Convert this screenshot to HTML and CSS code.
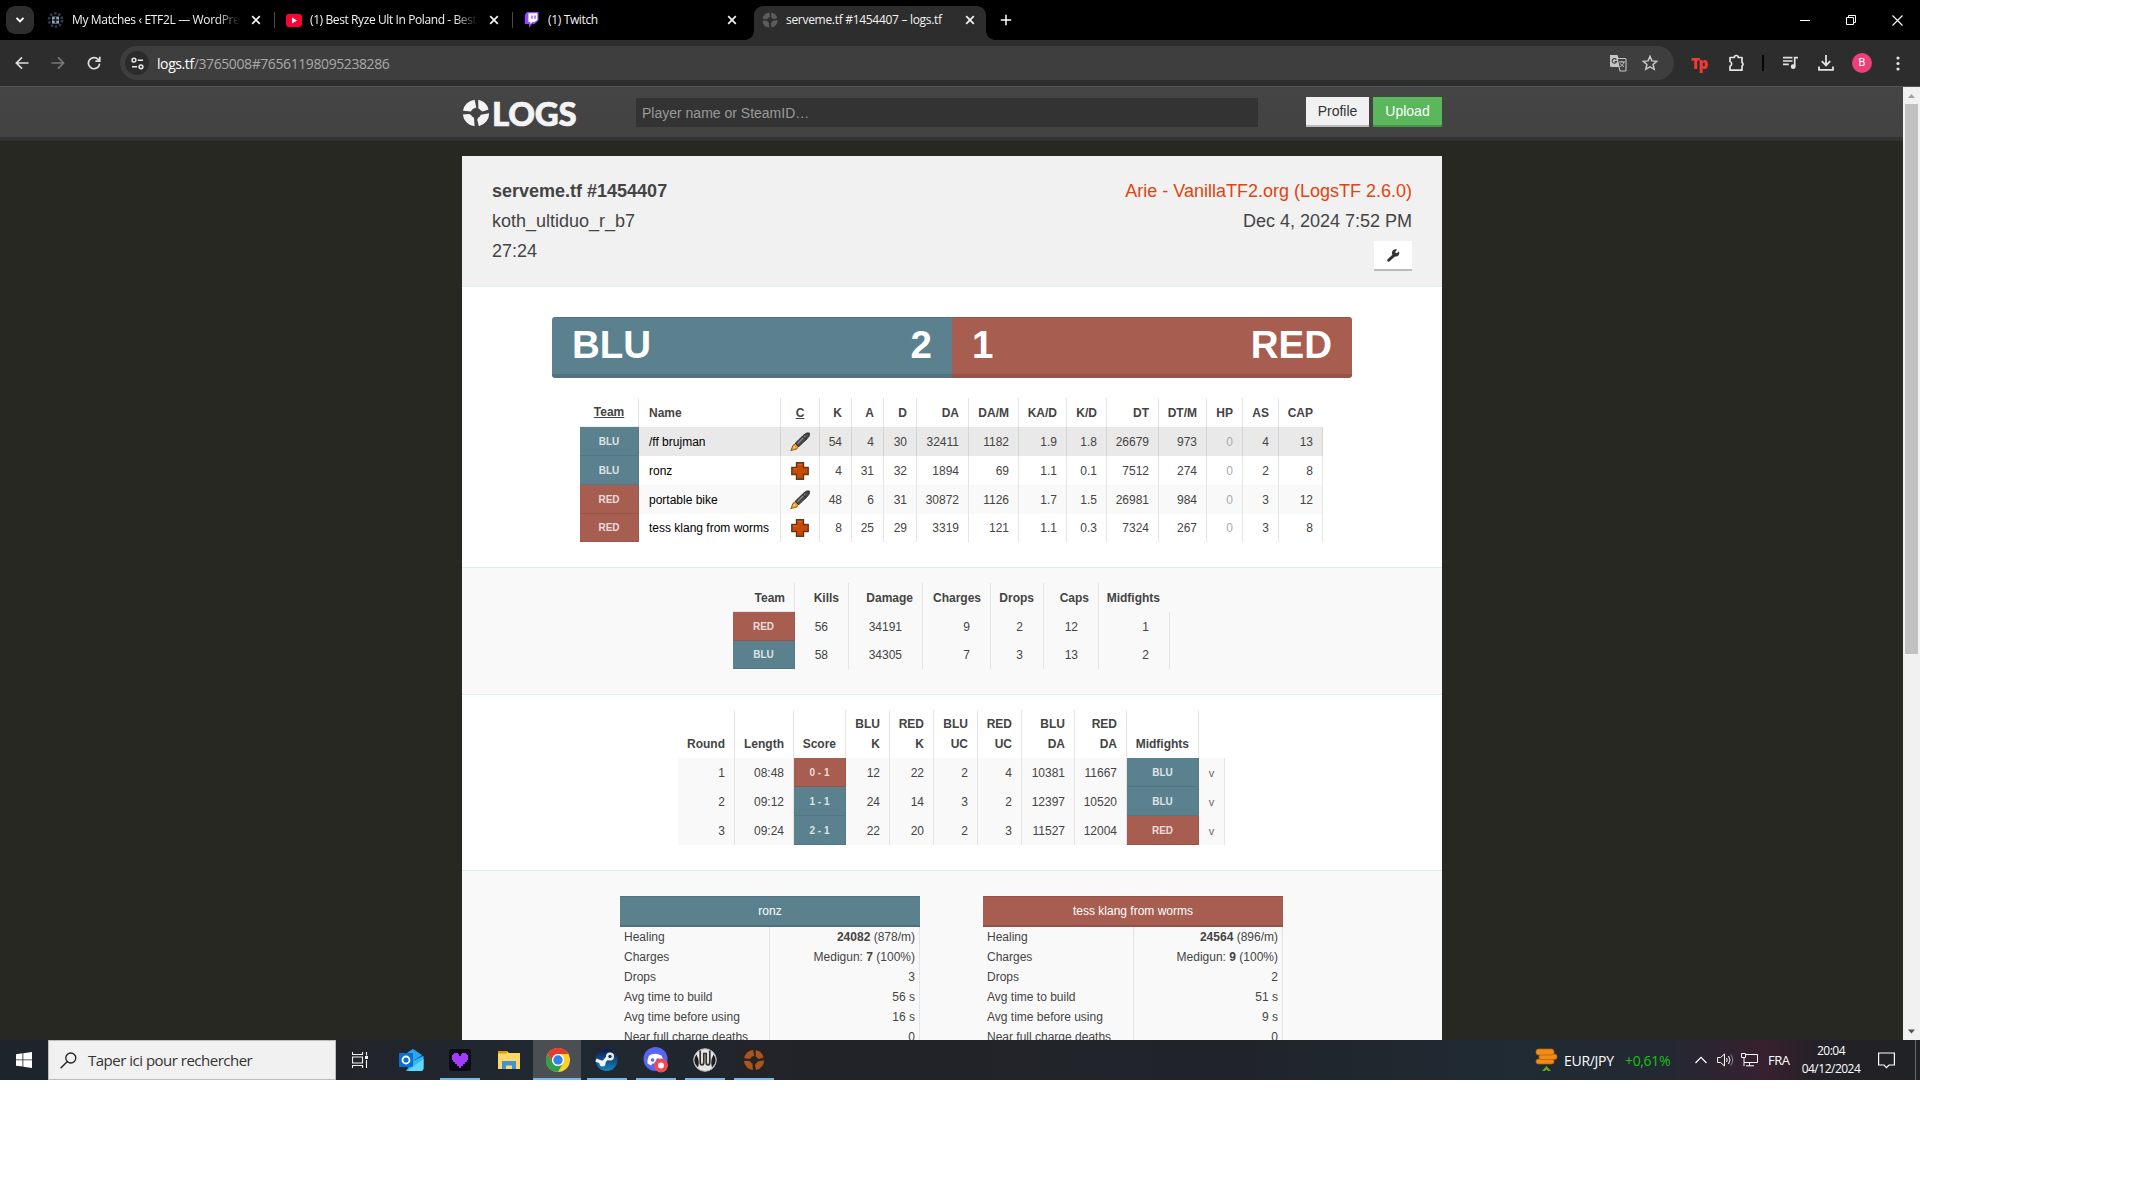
FILE: index.html
```html
<!DOCTYPE html>
<html lang="en">
<head>
<meta charset="utf-8">
<title>serveme.tf #1454407 – logs.tf</title>
<link rel="stylesheet" href="styles.css">
</head>
<body>
<svg width="0" height="0" class="defs">
  <defs>
    <symbol id="x" viewBox="0 0 10 10"><path d="M1.2 1.2l7.6 7.6M8.8 1.2L1.2 8.8" stroke="currentColor" stroke-width="1.7" fill="none"/></symbol>
    <symbol id="tf" viewBox="0 0 28 28"><g fill="currentColor"><path d="M12.6 .7A13.300 13.300 0 0 0 1 11.800L9 12.600A5 5 0 0 1 11.200 9.800L14.300 8.600Z"/><path d="M16.200 .8A13.300 13.300 0 0 1 26.600 10.600L20.600 12.600 18.800 11.600A5 5 0 0 0 16.400 9.600Z"/><path d="M27.200 14.200A13.300 13.300 0 0 1 16.800 27.200L15.200 20.400 16.400 18.600A5 5 0 0 0 18.800 15.800Z"/><path d="M.8 15.400L7.400 15 9.300 16.200A5 5 0 0 0 12 18.700L12.600 27.300A13.300 13.300 0 0 1 .8 15.400Z"/></g></symbol>
    <symbol id="rocket" viewBox="0 0 20 20"><path d="M0.8 18.6L3 13.2l2.6-1.4 2.6 2.6-1.5 2.7z" fill="#f59a1c" stroke="#5a3a10" stroke-width=".7"/><path d="M3 16.6l1.3-2.5 1.4 1.4z" fill="#ffe08a"/><path d="M5.2 11.200l2.800-2.600L13 3.6l3.6-2.6h2.8l-.2 3-2.8 3.6-5.200 4.600-2.400 2.600z" fill="#4a4a4a" stroke="#222" stroke-width=".9"/><path d="M7.6 11.6l7.6-7.8" stroke="#8d8d8d" stroke-width="1.2"/><path d="M12.6 4.2l3.4 3.4" stroke="#222"/></symbol>
    <symbol id="medic" viewBox="0 0 18 18"><path d="M5.5.8h7v4.7h4.7v7h-4.7v4.7h-7v-4.7H.8v-7h4.7z" fill="#ca4a00" stroke="#5e3a26" stroke-width="1.4"/><path d="M7 2.4h4M2.2 7h4.2" stroke="#e47a3c" stroke-width=".8"/></symbol>
  </defs>
</svg>
<div class="screen">
  <div class="tabstrip">
    <div class="tab-search"><svg width="10" height="8" viewBox="0 0 10 8"><path d="M1.5 1.8L5 5.4l3.5-3.6" stroke="#fff" stroke-width="1.9" fill="none"/></svg></div>
    <div class="tab tab-a">
      <svg class="fav" width="17" height="16" viewBox="0 0 17 16"><circle cx="8.5" cy="8" r="6.6" fill="none" stroke="#2c3b48" stroke-width="2.6" stroke-dasharray="2.6 1.6"/><rect x="5" y="4.6" width="7" height="7" fill="#8fa6b8"/><path d="M8.5 5v6M5.5 8h6" stroke="#10161c" stroke-width="1.6"/></svg>
      <span class="tab-title fade t1">My Matches ‹ ETF2L — WordPress</span>
      <svg class="tab-x" width="10" height="10"><use href="#x"/></svg>
    </div>
    <div class="tab tab-b">
      <svg class="fav" width="16" height="13" viewBox="0 0 16 13"><rect width="16" height="13" rx="3" fill="#ff0033"/><path d="M6 3.6v5.8l5-2.9z" fill="#fff"/></svg>
      <span class="tab-title fade t2">(1) Best Ryze Ult In Poland - Best</span>
      <svg class="tab-x" width="10" height="10"><use href="#x"/></svg>
    </div>
    <div class="tab tab-c">
      <svg class="fav" width="16" height="16" viewBox="0 0 16 16"><path d="M3 0h11.5v8.5L10.5 12H8l-3 3.5V12H.8V3z" fill="#9146ff"/><path d="M4.4 1.2h9v6.6L10.8 10H8.4l-2.2 2v-2H4.4z" fill="#fff"/><path d="M8 3.4v3.4M11 3.4v3.4" stroke="#9146ff" stroke-width="1.3"/></svg>
      <span class="tab-title t3">(1) Twitch</span>
      <svg class="tab-x" width="10" height="10"><use href="#x"/></svg>
    </div>
    <div class="tab active">
      <svg class="fav" width="16" height="16" color="#5d5d5d"><use href="#tf"/></svg>
      <span class="tab-title t4">serveme.tf #1454407 – logs.tf</span>
      <svg class="tab-x" width="10" height="10"><use href="#x"/></svg>
    </div>
    <svg class="plus" width="12" height="12" viewBox="0 0 12 12"><path d="M6 .8v10.4M.8 6h10.4" stroke="#fff" stroke-width="1.5"/></svg>
    <div class="wincontrols">
      <svg width="10" height="10" viewBox="0 0 10 10"><path d="M0 5.5h10" stroke="#fff"/></svg>
      <svg width="10" height="10" viewBox="0 0 10 10"><path d="M.5 2.5h7v7h-7zM2.5 2.5v-2h7v7h-2" stroke="#fff" fill="none"/></svg>
      <svg width="11" height="11" viewBox="0 0 11 11"><path d="M.5.5l10 10M10.5.5l-10 10" stroke="#fff" stroke-width="1.1"/></svg>
    </div>
  </div>
  <div class="toolbar">
    <div class="nav">
      <svg width="14" height="14" viewBox="0 0 14 14"><path d="M13.5 7H1.6M7 1.4L1.4 7 7 12.6" stroke="#dedede" stroke-width="1.7" fill="none"/></svg>
      <svg width="14" height="14" viewBox="0 0 14 14"><path d="M.5 7h11.9M7 1.4L12.6 7 7 12.6" stroke="#777" stroke-width="1.7" fill="none"/></svg>
      <svg width="14" height="14" viewBox="0 0 14 14"><path d="M12.6 7.6A5.6 5.6 0 1 1 11 3.2L12.4 4.6M12.8.8v4.4H8.4" stroke="#dedede" stroke-width="1.7" fill="none"/></svg>
    </div>
    <div class="urlbar">
      <div class="chip"><svg width="13" height="13" viewBox="0 0 13 13"><g stroke="#e8e8e8" stroke-width="1.5" fill="none"><circle cx="3" cy="3.2" r="1.9"/><path d="M6.8 3.2H12M1 9.8h5.2"/><circle cx="10" cy="9.8" r="1.9"/></g></svg></div>
      <span class="url"><b>logs.tf</b>/3765008#76561198095238286</span>
      <svg class="translate" width="18" height="18" viewBox="0 0 18 18"><path d="M1 1h7.5l4 12H2.5A1.5 1.5 0 0 1 1 11.500z" fill="#c4c4c4"/><path d="M8.200 4.500H16a1 1 0 0 1 1 1V16a1 1 0 0 1-1 1h-5z" fill="#3f3f3f" stroke="#c4c4c4" stroke-width="1.1"/><path d="M7.300 5.600A2.300 2.300 0 1 0 7.600 7.600H5.600" stroke="#3f3f3f" stroke-width="1.100" fill="none"/><path d="M10 8h6M13 6.800V8M14.800 8c-.5 2.500-2 3.700-3.500 4.700M11.300 9.500c1 1.500 2 2.300 3.700 3.200" stroke="#c4c4c4" fill="none"/></svg>
      <svg width="16" height="16" viewBox="0 0 16 16"><path d="M8 1.400l1.900 4.500 4.900.4-3.700 3.200 1.100 4.800L8 11.800l-4.200 2.500 1.100-4.800L1.200 6.300l4.900-.4z" stroke="#c8c8c8" stroke-width="1.500" fill="none"/></svg>
    </div>
    <div class="exts">
      <span class="tp">T<i>p</i></span>
      <svg class="puz" width="18" height="18" viewBox="0 0 18 18"><path d="M2 3.500h4.300a2 2 0 0 1 4 0H14v5a2 2 0 0 1 0 3.500v4.200H2v-4a2.500 2.500 0 0 0 0-4.700z" stroke="#e3e3e3" stroke-width="1.700" stroke-linejoin="round" fill="none"/></svg>
      <i class="sep"></i>
      <svg class="mus" width="17" height="14" viewBox="0 0 17 14"><path d="M1 1.700h9.500M1 5h9.500M1 8.300h5.800M12.700 10.500V1.700h3.300" stroke="#e3e3e3" stroke-width="1.700" fill="none"/><circle cx="11.200" cy="10.700" r="2.400" fill="#e3e3e3"/></svg>
      <svg class="dl" width="16" height="16" viewBox="0 0 16 16"><path d="M8 0v10M3.800 6.200L8 10.400l4.200-4.200M1 11.500v3.400h14v-3.400" stroke="#e3e3e3" stroke-width="1.800" fill="none"/></svg>
      <span class="avatar">B</span>
      <svg width="4" height="15" viewBox="0 0 4 15"><g fill="#e3e3e3"><circle cx="2" cy="2" r="1.600"/><circle cx="2" cy="7.500" r="1.600"/><circle cx="2" cy="13" r="1.600"/></g></svg>
    </div>
  </div>
  <div class="viewport">
    <div class="page">
      <header class="site">
        <div class="logo"><svg width="28" height="28" color="#f4f4f4"><use href="#tf"/></svg><span>LOGS</span></div>
        <div class="search">Player name or SteamID…</div>
        <div class="btn">Profile</div><div class="btn green">Upload</div>
      </header>
      <main>
        <section class="head">
          <div><strong>serveme.tf #1454407</strong><br>koth_ultiduo_r_b7<br>27:24</div>
          <div class="right"><span class="link">Arie - VanillaTF2.org (LogsTF 2.6.0)</span><br>Dec 4, 2024 7:52 PM
            <div class="tool"><svg width="13" height="13" viewBox="0 0 13 13"><path d="M1.700 11.300L7.600 5.600" stroke="#333" stroke-width="2.900" stroke-linecap="round"/><path d="M11.900 2.200L9.800 4.300 8.500 3.800 8.300 2.700 10.300.6A3.700 3.700 0 1 0 12.300 4.500Z" fill="#333"/></svg></div>
          </div>
        </section>
        <section class="players">
          <div class="score"><div class="blu"><span>BLU</span><span>2</span></div><div class="red"><span>1</span><span>RED</span></div></div>
          <table class="t-players">
            <colgroup><col style="width:59px"><col style="width:142px"><col style="width:39px"><col style="width:32px"><col style="width:32px"><col style="width:33px"><col style="width:52px"><col style="width:50px"><col style="width:48px"><col style="width:40px"><col style="width:52px"><col style="width:48px"><col style="width:36px"><col style="width:36px"><col style="width:44px"></colgroup>
            <tr class="h"><th class="team"><u>Team</u></th><th class="name">Name</th><th class="cls"><u>C</u></th><th>K</th><th>A</th><th>D</th><th>DA</th><th>DA/M</th><th>KA/D</th><th>K/D</th><th>DT</th><th>DT/M</th><th>HP</th><th>AS</th><th>CAP</th></tr>
            <tr class="sel"><td class="blu">BLU</td><td class="name">/ff brujman</td><td class="cls"><svg width="20" height="20"><use href="#rocket"/></svg></td><td>54</td><td>4</td><td>30</td><td>32411</td><td>1182</td><td>1.9</td><td>1.8</td><td>26679</td><td>973</td><td class="z">0</td><td>4</td><td>13</td></tr>
            <tr><td class="blu">BLU</td><td class="name">ronz</td><td class="cls"><svg width="18" height="18"><use href="#medic"/></svg></td><td>4</td><td>31</td><td>32</td><td>1894</td><td>69</td><td>1.1</td><td>0.1</td><td>7512</td><td>274</td><td class="z">0</td><td>2</td><td>8</td></tr>
            <tr class="odd"><td class="red">RED</td><td class="name">portable bike</td><td class="cls"><svg width="20" height="20"><use href="#rocket"/></svg></td><td>48</td><td>6</td><td>31</td><td>30872</td><td>1126</td><td>1.7</td><td>1.5</td><td>26981</td><td>984</td><td class="z">0</td><td>3</td><td>12</td></tr>
            <tr class="last"><td class="red">RED</td><td class="name">tess klang from worms</td><td class="cls"><svg width="18" height="18"><use href="#medic"/></svg></td><td>8</td><td>25</td><td>29</td><td>3319</td><td>121</td><td>1.1</td><td>0.3</td><td>7324</td><td>267</td><td class="z">0</td><td>3</td><td>8</td></tr>
          </table>
        </section>
        <section class="teams">
          <table class="t-teams">
            <colgroup><col style="width:62px"><col style="width:54px"><col style="width:74px"><col style="width:68px"><col style="width:53px"><col style="width:55px"><col style="width:71px"></colgroup>
            <tr class="h"><th class="tm">Team</th><th>Kills</th><th>Damage</th><th>Charges</th><th>Drops</th><th>Caps</th><th>Midfights</th></tr>
            <tr><td class="red">RED</td><td>56</td><td>34191</td><td>9</td><td>2</td><td>12</td><td>1</td></tr>
            <tr class="last"><td class="blu">BLU</td><td>58</td><td>34305</td><td>7</td><td>3</td><td>13</td><td>2</td></tr>
          </table>
        </section>
        <section class="rounds">
          <table class="t-rounds">
            <colgroup><col style="width:57px"><col style="width:59px"><col style="width:52px"><col style="width:44px"><col style="width:44px"><col style="width:44px"><col style="width:44px"><col style="width:53px"><col style="width:52px"><col style="width:72px"><col style="width:26px"></colgroup>
            <tr class="h"><th>Round</th><th>Length</th><th>Score</th><th>BLU<br>K</th><th>RED<br>K</th><th>BLU<br>UC</th><th>RED<br>UC</th><th>BLU<br>DA</th><th>RED<br>DA</th><th>Midfights</th><th></th></tr>
            <tr class="odd"><td>1</td><td>08:48</td><td class="red">0 - 1</td><td>12</td><td>22</td><td>2</td><td>4</td><td>10381</td><td>11667</td><td class="blu">BLU</td><td class="v">v</td></tr>
            <tr class="odd"><td>2</td><td>09:12</td><td class="blu">1 - 1</td><td>24</td><td>14</td><td>3</td><td>2</td><td>12397</td><td>10520</td><td class="blu">BLU</td><td class="v">v</td></tr>
            <tr class="odd"><td>3</td><td>09:24</td><td class="blu">2 - 1</td><td>22</td><td>20</td><td>2</td><td>3</td><td>11527</td><td>12004</td><td class="red">RED</td><td class="v">v</td></tr>
          </table>
        </section>
        <section class="medics">
          <div class="medic">
            <h6 class="blu">ronz</h6>
            <dl><dt>Healing</dt><dd><b>24082</b> (878/m)</dd><dt>Charges</dt><dd>Medigun: <b>7</b> (100%)</dd><dt>Drops</dt><dd>3</dd><dt>Avg time to build</dt><dd>56 s</dd><dt>Avg time before using</dt><dd>16 s</dd><dt>Near full charge deaths</dt><dd>0</dd></dl>
          </div>
          <div class="medic second">
            <h6 class="red">tess klang from worms</h6>
            <dl><dt>Healing</dt><dd><b>24564</b> (896/m)</dd><dt>Charges</dt><dd>Medigun: <b>9</b> (100%)</dd><dt>Drops</dt><dd>2</dd><dt>Avg time to build</dt><dd>51 s</dd><dt>Avg time before using</dt><dd>9 s</dd><dt>Near full charge deaths</dt><dd>0</dd></dl>
          </div>
        </section>
      </main>
    </div>
    <div class="scrollbar">
      <svg width="17" height="17" viewBox="0 0 17 17"><path d="M5 11h7L8.500 7z" fill="#a0a0a0"/></svg>
      <div class="thumb"></div>
      <svg width="17" height="17" viewBox="0 0 17 17"><path d="M5 6.500h7L8.500 10.500z" fill="#505050"/></svg>
    </div>
  </div>
  <div class="taskbar">
    <div class="start"><svg width="16" height="16" viewBox="0 0 16 16"><path d="M0 2.200L6.500 1.300V7.500H0zM7.300 1.200L16 0v7.500H7.300zM0 8.300h6.500v6.300L0 13.700zM7.300 8.300H16V16l-8.700-1.200z" fill="#fff"/></svg></div>
    <div class="find"><svg width="17" height="17" viewBox="0 0 17 17"><circle cx="10.800" cy="6" r="5" stroke="#222" stroke-width="1.300" fill="none"/><path d="M7.300 9.600L.6 16.300" stroke="#222" stroke-width="1.400"/></svg><span>Taper ici pour rechercher</span></div>
    <div class="app tv"><svg width="17" height="16" viewBox="0 0 17 16"><path d="M.5 0v2.500h10V0M.5 16v-2.500h10V16M.5 5h10v6H.5zM14.500 0v3.500M14.500 8v8" stroke="#f2f2f2" stroke-width="1.100" fill="none"/><path d="M13 4h3v3h-3z" fill="#f2f2f2"/></svg></div>
    <div class="app mail"><svg width="25" height="24" viewBox="0 0 25 24"><path d="M3 8.500L14 1l10.500 7.500V14H3z" fill="#0f5fb5"/><path d="M5 7L14 1l9 6-9 6z" fill="#2fa5ec"/><path d="M14 13l10.500-5v12a3 3 0 0 1-3 3H7z" fill="#33b7ee"/><path d="M8 23L24.500 11v9a3 3 0 0 1-3 3z" fill="#5ed8fb"/><rect x="0" y="5" width="14" height="14" rx="1" fill="#0a6fd0"/><circle cx="7" cy="12" r="3.500" stroke="#fff" stroke-width="1.800" fill="none"/></svg></div>
    <div class="app run"><svg width="22" height="22" viewBox="0 0 22 22"><rect width="22" height="22" rx="3" fill="#0d0b14"/><path d="M11 19h1v-2h2v-2h2v-2h2v-2h1V6h-1V5h-1V4h-4v1h-1v2h-2V5H9V4H5v1H4v1H3v5h1v2h2v2h2v2h2v2z" fill="#a23bff"/></svg></div>
    <div class="app"><svg width="22" height="20" viewBox="0 0 22 20"><path d="M0 1h9l2 2h11v16H0z" fill="#ffd867"/><path d="M0 1h9v2.500H0z" fill="#e0a000"/><path d="M4 19v-8h14v8h-4v-3.500H8V19z" fill="#3d94d6"/></svg></div>
    <div class="app run on"><svg width="24" height="24" viewBox="0 0 24 24"><circle cx="12" cy="12" r="12" fill="#fdd02f"/><path d="M1.600 6A12 12 0 0 1 22.400 6H12a6 6 0 0 0-5.200 9z" fill="#e33b2e"/><path d="M1.600 6A12 12 0 0 0 12 24l5.200-9a6 6 0 0 1-10.400 0z" fill="#2f9e4f"/><circle cx="12" cy="12" r="6" fill="#fff"/><circle cx="12" cy="12" r="4.700" fill="#2f83ee"/></svg></div>
    <div class="app run"><svg width="23" height="22" viewBox="0 0 23 22"><defs><linearGradient id="st" x1="0" y1="0" x2="0" y2="1"><stop offset="0" stop-color="#11194a"/><stop offset="1" stop-color="#1585c0"/></linearGradient></defs><circle cx="11.500" cy="11" r="11" fill="url(#st)"/><path d="M1 11l7 3 5-6" stroke="#f0f4f8" stroke-width="3.500" fill="none"/><circle cx="15" cy="7.500" r="4" fill="#f0f4f8"/><circle cx="15" cy="7.500" r="2.200" fill="#16305e" stroke="#f0f4f8"/><circle cx="7.500" cy="14.500" r="3" fill="#f0f4f8"/></svg></div>
    <div class="app run"><svg width="25" height="26" viewBox="0 0 25 26"><circle cx="12.500" cy="12" r="12" fill="#5765f2"/><path d="M6 8.500Q12 5 18.500 8.500q2.500 4 2 8L17 18.500l-1.500-2h-6L8 18.500 4.500 16.500q-.5-4 1.500-8z" fill="#fff"/><circle cx="9.500" cy="13" r="1.800" fill="#5765f2"/><circle cx="15" cy="13" r="1.800" fill="#5765f2"/><circle cx="18" cy="18.500" r="7" fill="#ed4a55"/><circle cx="18" cy="18.500" r="3" fill="#fff"/></svg></div>
    <div class="app run"><svg width="24" height="24" viewBox="0 0 24 24"><circle cx="12" cy="12" r="11.300" fill="#e6e6e6" stroke="#b5b5b5"/><path d="M3.500 6.500Q7 13 5 19.500Q-1.500 13 3.500 6.500zM20.500 6.500Q17 13 19 19.500Q25.500 13 20.500 6.500z" fill="#1d1d1d"/><path d="M7.200 2.500v11.500q0 3 1.800 3t1.800-3V5.500h2.400V14q0 3 1.800 3t1.800-3V2.500" stroke="#333" stroke-width="1.700" fill="none"/></svg></div>
    <div class="app run"><svg width="24" height="24" viewBox="0 0 28 28" color="#a8551f"><rect width="28" height="28" rx="3" fill="#272322"/><use href="#tf" x="1.500" y="1.500" width="25" height="25"/></svg></div>
    <div class="tray">
      <svg class="coin" width="23" height="24" viewBox="0 0 23 24"><g fill="#f28c17" stroke="#b86200" stroke-width=".7"><rect x="1" y="11" width="18" height="5" rx="2.500"/><rect x="4" y="6" width="18" height="5.500" rx="2.500"/><rect x="1" y="1" width="18" height="6" rx="2.500"/></g><path d="M7 23l4.500-5 4.500 5h-3l-1.500-1.500L10 23z" fill="#6aaa10"/></svg>
      <span class="eur">EUR/JPY</span><span class="pct">+0,61%</span>
      <svg class="chev" width="12" height="8" viewBox="0 0 12 8"><path d="M.5 7L6 1.300 11.500 7" stroke="#fff" stroke-width="1.200" fill="none"/></svg>
      <svg class="spk" width="17" height="14" viewBox="0 0 17 14"><path d="M.6 4.500h3L7.500 1v12L3.600 9.500h-3z" stroke="#fff" fill="none"/><path d="M9.500 5q1.500 2 0 4M11.500 3q3 4 0 8" stroke="#fff" fill="none"/><path d="M13.700 1.500q4 5.500 0 11" stroke="#888" fill="none"/></svg>
      <svg class="net" width="17" height="14" viewBox="0 0 17 14"><path d="M5 1.500h11.500v8H3V5M.5.500h4v4h-4zM8.500 9.500v3M5 12.800h8M3 9.500v3.500" stroke="#fff" fill="none"/></svg>
      <span class="fra">FRA</span>
      <span class="clock">20:04<br>04/12/2024</span>
      <svg class="notif" width="17" height="17" viewBox="0 0 17 17"><path d="M.6 1h15.800v12h-5.400l-2.500 2.700L6 13H.6z" stroke="#fff" stroke-width="1.200" fill="none"/></svg>
      <i class="peek"></i>
    </div>
  </div>
</div>
</body>
</html>
```
FILE: styles.css
```css
* { box-sizing: border-box; }
body { margin: 0; background: #fff; font-family: "Liberation Sans", Arial, sans-serif; }
svg { display: block; flex: none; }
.defs { position: absolute; }
.screen { width: 1920px; height: 1080px; display: flex; flex-direction: column; overflow: hidden; }

/* browser tabs */
.tabstrip { height: 40px; flex: none; background: #000; display: flex; align-items: center; font-family: "Open Sans", sans-serif; font-size: 12px; color: #f2f2f2; }
.tab-search { width: 28px; height: 28px; margin-left: 6px; border-radius: 9px; background: #2e2e2e; display: flex; align-items: center; justify-content: center; }
.tab { height: 34px; display: flex; align-items: center; align-self: flex-end; padding-bottom: 6px; white-space: nowrap; }
.tab-a { width: 241px; padding-left: 13px; }
.tab-b { width: 238px; padding-left: 11px; }
.tab-c { width: 241px; padding-left: 11px; }
.tab-a, .tab-b { position: relative; }
.tab-a::after, .tab-b::after { content: ""; position: absolute; right: 0; top: 6px; width: 1px; height: 16px; background: #4a4a4a; }
.fav { margin-right: 8px; }
.tab-title { width: 168px; overflow: hidden; line-height: 18px; }
.fade { -webkit-mask-image: linear-gradient(90deg, #000 86%, transparent); mask-image: linear-gradient(90deg, #000 86%, transparent); }
.t1 { letter-spacing: -.35px; }
.t2 { letter-spacing: -.4px; }
.t3 { letter-spacing: -.35px; }
.t4 { letter-spacing: -.3px; width: 170px; }
.tab-x { margin-left: 11px; }
.active { position: relative; width: 232px; margin-left: 0; padding-left: 8px; background: #2d2d2d; border-radius: 9px 9px 0 0; }
.active .tab-x { margin-left: 9px; }
.active::before, .active::after { content: ""; position: absolute; bottom: 0; width: 9px; height: 9px; }
.active::before { left: -9px; background: radial-gradient(circle at 0 0, transparent 8.500px, #2d2d2d 9px); }
.active::after { right: -9px; background: radial-gradient(circle at 100% 0, transparent 8.500px, #2d2d2d 9px); }
.plus { margin-left: 14px; }
.wincontrols { margin-left: auto; margin-right: 17px; display: flex; gap: 36px; align-items: center; }

/* address row */
.toolbar { height: 47px; flex: none; background: #2d2d2d; border-bottom: 1px solid #555; display: flex; align-items: center; }
.nav { display: flex; gap: 22px; padding-left: 15px; width: 120px; }
.urlbar { width: 1554px; height: 34px; border-radius: 17px; background: #3e3e3e; display: flex; align-items: center; padding: 0 16px 0 5px; }
.chip { width: 24px; height: 24px; border-radius: 12px; background: #2b2b2b; display: flex; align-items: center; justify-content: center; }
.url { margin-left: 8px; flex: 1; font: 14px "Open Sans", sans-serif; letter-spacing: -.41px; color: #a9a9a9; }
.url b { font-weight: 400; color: #fff; }
.translate { margin-right: 15px; }
.exts { flex: 1; display: flex; align-items: center; }
.tp { width: 18px; margin-left: 17px; font: 800 15px/20px "Open Sans", sans-serif; color: #ee3b35; letter-spacing: -1.500px; }
.tp i { font-style: normal; }
.puz { margin-left: 19px; }
.sep { width: 2px; height: 16px; margin-left: 16px; background: #050505; }
.mus { margin-left: 18px; }
.dl { margin-left: 19px; }
.avatar { width: 20px; height: 20px; margin: 0 24px 0 18px; border-radius: 50%; background: #ec407a; color: #fff; font: 11px/20px Roboto, sans-serif; text-align: center; }

/* site */
.viewport { height: 953px; flex: none; display: flex; overflow: hidden; }
.page { width: 1903px; background: #282823; overflow: hidden; }
.site { height: 54px; padding: 10px 461px 0 462px; background: linear-gradient(#454545, #424242); border-bottom: 4px solid #333; display: flex; align-items: flex-start; }
.logo { width: 174px; padding-top: 2px; display: flex; color: #f4f4f4; }
.logo span { margin-left: 2px; font: 900 33px/28px Lato, sans-serif; letter-spacing: -.2px; -webkit-text-stroke: .7px #f4f4f4; }
.search { width: 622px; height: 29px; margin: 1px 48px 0 0; padding-left: 6px; background: #333; color: #999; font-size: 14px; line-height: 30px; }
.btn { width: 63px; height: 30px; margin-right: 4px; background: #f1f1f1; border-bottom: 2px solid #bbb; color: #333; font-size: 14px; line-height: 28px; text-align: center; }
.btn.green { width: 69px; margin: 0; background: #5bb75b; border-color: #449544; color: #fff; }
main { width: 980px; margin: 15px 0 0 462px; background: #fff; color: #444; font-size: 12px; }
section { border-bottom: 1px solid #dcefe9; }
.head { height: 131px; padding: 20px 30px 0; background: #f1f1f1; display: flex; justify-content: space-between; font-size: 18px; line-height: 30px; }
.right { text-align: right; }
.link { color: #e0440e; }
.tool { width: 38px; height: 30px; margin: 5px 0 0 auto; background: #fff; border-bottom: 2px solid #bbb; padding: 8px 0 0 13px; }
.blu { background: #5b818f; }
.red { background: #a75d50; }
.players { height: 281px; padding-top: 30px; }
.score { width: 800px; height: 61px; margin: 0 auto 20px; display: flex; border-radius: 3px; overflow: hidden; color: #fff; font: 700 38.500px/56px "Liberation Sans", sans-serif; }
.score div { flex: 1; display: flex; justify-content: space-between; padding: 0 20px; box-shadow: inset 0 1px rgba(0,0,0,.1), inset 0 -4px rgba(0,0,0,.1); }
table { table-layout: fixed; border-collapse: separate; border-spacing: 0; }
th, td { height: 29px; padding: 0 9px 0 0; text-align: right; border-right: 1px solid #e4e4e4; line-height: 20px; }
th { padding-top: 1px; }
tr.last td { height: 28px; }
tr.h th:last-child { border-right: 0; padding-right: 10px; }
td.blu, td.red { padding: 0; text-align: center; font-size: 10px; font-weight: 700; color: rgba(255,255,255,.8); border-right: 1px solid rgba(0,0,0,.06); box-shadow: inset 0 -1px rgba(0,0,0,.09); background-clip: border-box; }
.t-players { width: 743px; margin-left: 118px; }
.name { text-align: left; padding-left: 10px; }
td.name { color: #000; }
.t-players .team, .t-players .cls { text-align: center; padding: 0; }
.team { border-bottom: 1px solid #eee; }
.cls svg { margin: 0 auto; }
.sel td:not(.blu) { background: #e9e9e9; border-color: #d5d5d5; }
.odd td:not(.blu):not(.red) { background: #f9f9f9; }
.z { color: #aaa; }
.teams { height: 127px; padding-top: 15px; background: #f9f9f9; }
.t-teams { width: 437px; margin-left: 271px; }
.t-teams td:not(.blu):not(.red) { padding-right: 20px; }
.tm { border-bottom: 1px solid #e4e4e4; }
.rounds { height: 176px; padding-top: 15px; }
.t-rounds { width: 547px; margin-left: 216px; }
.t-rounds .h th { height: 48px; vertical-align: bottom; padding-bottom: 4px; padding-top: 4px; }
.t-rounds td.v { color: #666; padding: 0; text-align: center; font-size: 11px; }
.medics { height: 300px; padding: 25px 0 0 158px; background: #f9f9f9; display: flex; gap: 63px; }
.medic { width: 300px; }
h6 { margin: 0; height: 31px; color: #fff; font-size: 12px; font-weight: 400; line-height: 30px; text-align: center; box-shadow: inset 0 1px rgba(0,0,0,.1), inset 0 -2px rgba(0,0,0,.12); }
dl { margin: 0; display: grid; grid-template-columns: 150px 150px; line-height: 20px; }
.second dl { grid-template-columns: 151px 149px; }
dt { padding-left: 4px; border-right: 1px solid #e4e4e4; }
dd { margin: 0; padding-right: 4px; text-align: right; border-right: 1px solid #e4e4e4; }
.scrollbar { width: 17px; background: #f1f1f1; display: flex; flex-direction: column; }
.scrollbar .thumb { width: 13px; height: 550px; margin: 0 2px auto; background: #c1c1c1; }

/* Windows taskbar */
.taskbar { height: 40px; flex: none; background: linear-gradient(90deg, #1d242b, #22242a 18%, #1f2932 30%, #222328 42%, #20242a 65%, #202b34 79%, #242832 87%, #38202f 92%, #222127 95%, #212226); display: flex; font-family: "Open Sans", sans-serif; color: #fff; }
.start { width: 48px; display: flex; align-items: center; justify-content: center; }
.find { width: 288px; border: 1px solid #bdbdbd; background: #f1f1f1; display: flex; align-items: center; padding-left: 11px; font-size: 15px; color: #333; }
.find span { margin-left: 11px; letter-spacing: -.5px; }
.app { width: 49px; display: flex; align-items: center; justify-content: center; position: relative; }
.tv { width: 50px; padding-right: 2px; }
.mail { padding-left: 2px; }
.run::after { content: ""; position: absolute; left: 5px; width: 40px; bottom: 0; height: 2px; background: #76b9ed; }
.on { background: linear-gradient(90deg, #4b4e53 48px, transparent 48px); }
.on::after { left: 0; width: 48px; }
.tray { margin-left: auto; display: flex; align-items: center; height: 40px; font-size: 14px; }
.coin { margin-right: -1px; }
.eur { width: 61px; margin-left: 7px; letter-spacing: -.3px; }
.pct { width: 70px; color: #16c016; letter-spacing: -.35px; }
.chev { margin: 0 10px 0 0; }
.spk { margin-right: 7px; }
.fra { width: 25px; margin-left: 10px; font-size: 13px; letter-spacing: -.5px; }
.clock { width: 66px; margin-left: 5px; text-align: center; font-size: 12px; line-height: 18px; letter-spacing: -.5px; white-space: nowrap; }
.notif { margin-left: 14px; }
.peek { width: 1px; height: 40px; margin: 0 4px 0 20px; background: #6a6c70; }
```
